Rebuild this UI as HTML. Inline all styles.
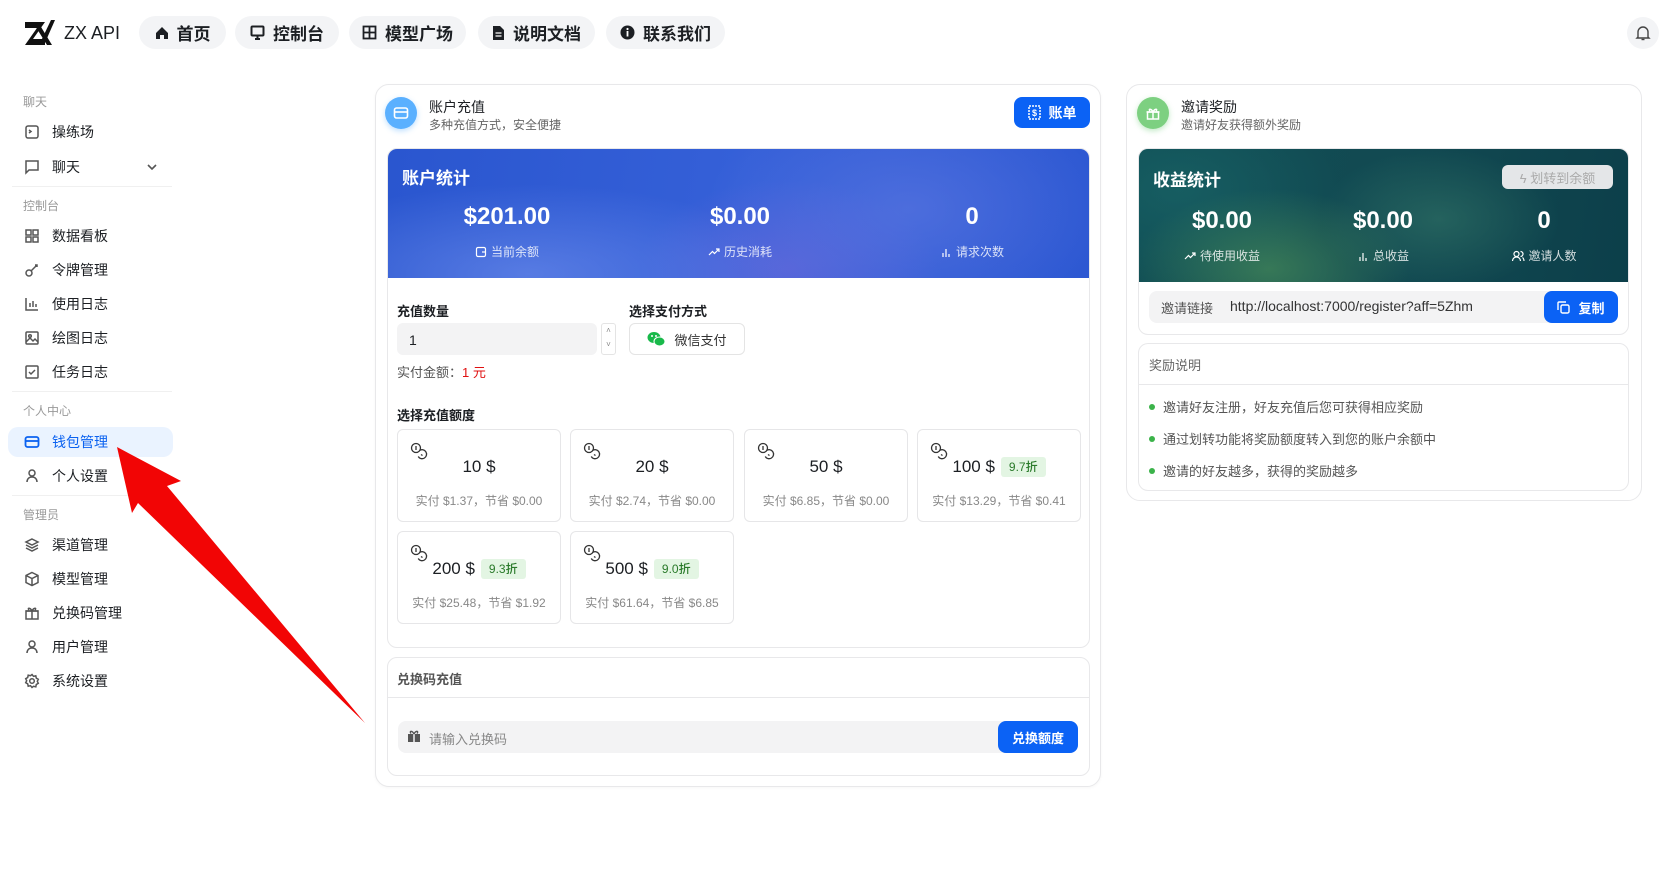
<!DOCTYPE html>
<html><head><meta charset="utf-8"><style>
*{box-sizing:border-box;margin:0;padding:0}
body{width:1663px;height:870px;background:#fff;font-family:"Liberation Sans","Noto Sans CJK SC",sans-serif;color:#1c1f23;position:relative;overflow:hidden;font-size:14px}
.a{position:absolute}
.pill{position:absolute;top:16px;height:33px;border-radius:17px;background:#f3f4f6;font-size:17px;font-weight:600;display:flex;align-items:center;justify-content:center;gap:8px;color:#1c1f23}
.sl{position:absolute;left:23px;font-size:12px;color:#999}
.si{position:absolute;left:24px;display:flex;align-items:center;gap:12px;font-size:14px;color:#1c1f23;transform:translateY(-50%)}
.si svg{width:16px;height:16px;stroke:#555;fill:none;stroke-width:1.5}
.card{position:absolute;border:1px solid #e8e8ea;border-radius:14px;background:#fff}
.hd1{font-size:14px;color:#1c1f23}
.hd2{font-size:12px;color:#666}
.val{position:absolute;color:#fff;font-weight:700;font-size:24px;transform:translateX(-50%);white-space:nowrap}
.lab{position:absolute;color:rgba(255,255,255,.82);font-size:12px;transform:translateX(-50%);white-space:nowrap;display:flex;align-items:center;gap:4px}
.g{position:absolute;width:164px;height:93px;border:1px solid #e6e6e8;border-radius:6px;background:#fff}
.g .amt{position:absolute;top:27px;left:0;right:0;text-align:center;font-size:17px;font-weight:500;color:#1c1f23}
.g .sub{position:absolute;top:62px;left:0;right:0;text-align:center;font-size:12px;color:#888}
.g svg{position:absolute;left:12px;top:12px}
.tag{display:inline-block;background:#e3f5e3;color:#2a7a2a;font-size:12px;padding:3px 8px;border-radius:3px;margin-left:6px;vertical-align:1px;line-height:14px}
.li{position:absolute;left:1156px;font-size:13px;color:#555;display:flex;align-items:center;gap:8px}
.li i{width:6px;height:6px;border-radius:3px;background:#3bb34a;display:inline-block}
#L{position:absolute;left:-3px;top:0;width:1663px;height:870px}
#R{position:absolute;left:-7px;top:0;width:1663px;height:870px}
</style></head><body>

<!-- header -->
<div class="a" style="left:24px;top:19px;display:flex;align-items:center;gap:8px">
<svg width="32" height="28" viewBox="0 0 32 28"><path d="M1 3h20l-12 17h12v6H1l12-17H1z" fill="#111"/><path d="M20 26L31 1h-4L17 22z" fill="#111"/><path d="M14 3l14 23h-5L10 5z" fill="#111"/></svg>
<span style="font-size:18px;font-weight:500">ZX API</span></div>
<div class="pill" style="left:139px;width:87px"><svg width="14" height="14" viewBox="0 0 14 14"><path d="M7 1L1 7v6h4V9h4v4h4V7z" fill="#1c1f23"/></svg>首页</div>
<div class="pill" style="left:235px;width:104px"><svg width="15" height="15" viewBox="0 0 15 15" fill="none" stroke="#1c1f23" stroke-width="2"><rect x="1.5" y="1.5" width="12" height="9" rx="1"/><path d="M5 14h5M7.5 11v3"/></svg>控制台</div>
<div class="pill" style="left:349px;width:117px"><svg width="15" height="15" viewBox="0 0 15 15" fill="none" stroke="#1c1f23" stroke-width="1.8"><rect x="1.5" y="1.5" width="12" height="12"/><path d="M7.5 1.5v12M1.5 7.5h12"/></svg>模型广场</div>
<div class="pill" style="left:478px;width:117px"><svg width="13" height="16" viewBox="0 0 13 16"><path d="M1 1h7l4 4v10H1z" fill="#1c1f23"/><path d="M3.5 8h6M3.5 11h6" stroke="#fff" stroke-width="1.3"/></svg>说明文档</div>
<div class="pill" style="left:606px;width:119px"><svg width="15" height="15" viewBox="0 0 15 15"><circle cx="7.5" cy="7.5" r="7" fill="#1c1f23"/><rect x="6.6" y="6" width="1.8" height="5.5" fill="#fff"/><circle cx="7.5" cy="4" r="1.1" fill="#fff"/></svg>联系我们</div>
<div class="a" style="left:1627px;top:17px;width:32px;height:32px;border-radius:16px;background:#f3f4f6;display:flex;align-items:center;justify-content:center"><svg width="16" height="16" viewBox="0 0 16 16" fill="none" stroke="#444" stroke-width="1.4"><path d="M3 12V7a5 5 0 0110 0v5l1 1H2z"/><path d="M6.5 14.5h3"/></svg></div>

<!-- sidebar -->
<div class="sl" style="top:93px">聊天</div>
<div class="si" style="top:132px"><svg viewBox="0 0 16 16"><rect x="2" y="2" width="12" height="12" rx="2"/><path d="M5 6l2 1.5L5 9"/></svg>操练场</div>
<div class="si" style="top:167px"><svg viewBox="0 0 16 16"><path d="M2 2h12v9H5l-3 3z"/></svg>聊天</div>
<svg class="a" style="left:146px;top:161px" width="12" height="12" viewBox="0 0 12 12" fill="none" stroke="#555" stroke-width="1.6"><path d="M2 4l4 4 4-4"/></svg>
<div class="a" style="left:12px;top:186px;width:160px;height:1px;background:#f0f0f0"></div>
<div class="sl" style="top:197px">控制台</div>
<div class="si" style="top:236px"><svg viewBox="0 0 16 16"><rect x="2" y="2" width="5" height="5"/><rect x="9" y="2" width="5" height="5"/><rect x="2" y="9" width="5" height="5"/><rect x="9" y="9" width="5" height="5"/></svg>数据看板</div>
<div class="si" style="top:270px"><svg viewBox="0 0 16 16"><circle cx="5" cy="11" r="3"/><path d="M7 9l6-6M11 3h2v2"/></svg>令牌管理</div>
<div class="si" style="top:304px"><svg viewBox="0 0 16 16"><path d="M2 2v12h12M6 11V7M9 11V5M12 11V8"/></svg>使用日志</div>
<div class="si" style="top:338px"><svg viewBox="0 0 16 16"><rect x="2" y="2" width="12" height="12" rx="1"/><circle cx="6" cy="6" r="1.3"/><path d="M2 12l4-4 3 3 2-2 3 3"/></svg>绘图日志</div>
<div class="si" style="top:372px"><svg viewBox="0 0 16 16"><rect x="2" y="2" width="12" height="12" rx="1"/><path d="M5 8l2 2 4-4"/></svg>任务日志</div>
<div class="a" style="left:12px;top:391px;width:160px;height:1px;background:#f0f0f0"></div>
<div class="sl" style="top:402px">个人中心</div>
<div class="a" style="left:8px;top:427px;width:165px;height:30px;border-radius:10px;background:#eaf3ff"></div>
<div class="si" style="top:442px;color:#0b62f0"><svg viewBox="0 0 16 16" style="stroke:#0b62f0;stroke-width:1.8"><rect x="1.5" y="3" width="13" height="10" rx="2"/><path d="M1.5 7h13"/></svg>钱包管理</div>
<div class="si" style="top:476px"><svg viewBox="0 0 16 16"><circle cx="8" cy="5" r="3"/><path d="M3 14c0-3 2-5 5-5s5 2 5 5"/></svg>个人设置</div>
<div class="a" style="left:12px;top:495px;width:160px;height:1px;background:#f0f0f0"></div>
<div class="sl" style="top:506px">管理员</div>
<div class="si" style="top:545px"><svg viewBox="0 0 16 16"><path d="M8 2l6 3-6 3-6-3zM2 8l6 3 6-3M2 11l6 3 6-3"/></svg>渠道管理</div>
<div class="si" style="top:579px"><svg viewBox="0 0 16 16"><path d="M8 1.5l6 3v7l-6 3-6-3v-7zM2 4.5l6 3 6-3M8 7.5v7"/></svg>模型管理</div>
<div class="si" style="top:613px"><svg viewBox="0 0 16 16"><rect x="2" y="6" width="12" height="8"/><path d="M1.5 6h13M8 6v8M8 6C6 2 3 3 5 5M8 6c2-4 5-3 3-1"/></svg>兑换码管理</div>
<div class="si" style="top:647px"><svg viewBox="0 0 16 16"><circle cx="8" cy="5" r="3"/><path d="M3 14c0-3 2-5 5-5s5 2 5 5"/></svg>用户管理</div>
<div class="si" style="top:681px"><svg viewBox="0 0 16 16"><circle cx="8" cy="8" r="2.3"/><path d="M8 1.5l1.5 1.8 2.3-.5.5 2.3 2 1.2-1 2 1 2-2 1.2-.5 2.3-2.3-.5L8 14.5l-1.5-1.8-2.3.5-.5-2.3-2-1.2 1-2-1-2 2-1.2.5-2.3 2.3.5z"/></svg>系统设置</div>

<div id="L">
<!-- main left card -->
<div class="card" style="left:378px;top:84px;width:726px;height:703px;box-shadow:0 1px 3px rgba(0,0,0,.04)"></div>
<div class="a" style="left:388px;top:97px;width:32px;height:32px;border-radius:16px;background:#5ab0ff;box-shadow:0 2px 6px rgba(90,176,255,.4);display:flex;align-items:center;justify-content:center"><svg width="16" height="16" viewBox="0 0 16 16" fill="none" stroke="#fff" stroke-width="1.6"><rect x="1.5" y="3" width="13" height="10" rx="2"/><path d="M1.5 7h13"/></svg></div>
<div class="a hd1" style="left:432px;top:97px">账户充值</div>
<div class="a hd2" style="left:432px;top:116px">多种充值方式，安全便捷</div>
<div class="a" style="left:1017px;top:97px;width:76px;height:31px;border-radius:8px;background:#0b62f5;color:#fff;font-weight:700;font-size:14px;display:flex;align-items:center;justify-content:center;gap:8px"><svg width="13" height="15" viewBox="0 0 13 15" fill="none" stroke="#fff" stroke-width="1.5"><rect x="1" y="1" width="11" height="13" stroke-dasharray="2 1"/><text x="6.5" y="11" font-size="9" fill="#fff" stroke="none" text-anchor="middle" font-family="Liberation Sans" font-weight="700">$</text></svg>账单</div>

<div class="card" style="left:390px;top:148px;width:703px;height:500px;border-radius:10px;overflow:hidden">
<div style="height:129px;background:radial-gradient(ellipse 260px 90px at 140px 125px,rgba(120,150,240,.55),transparent),radial-gradient(ellipse 200px 120px at 520px 60px,rgba(110,130,230,.45),transparent),radial-gradient(ellipse 150px 90px at 400px 120px,rgba(150,110,220,.35),transparent),linear-gradient(100deg,#2a56cf,#3560d8 50%,#2d58d2)"></div>
</div>
<div class="a" style="left:405px;top:164px;color:#fff;font-weight:700;font-size:17px">账户统计</div>
<div class="val" style="left:510px;top:203px">$201.00</div>
<div class="val" style="left:743px;top:203px">$0.00</div>
<div class="val" style="left:975px;top:203px">0</div>
<div class="lab" style="left:510px;top:243px"><svg width="12" height="12" viewBox="0 0 12 12" fill="none" stroke="#fff" stroke-width="1.2"><rect x="1.5" y="1.5" width="9" height="9" rx="1.5"/><path d="M7 6h3.5"/></svg>当前余额</div>
<div class="lab" style="left:743px;top:243px"><svg width="12" height="12" viewBox="0 0 12 12" fill="none" stroke="#fff" stroke-width="1.2"><path d="M1 9l3.5-3.5 2 2L11 3M8 3h3v3"/></svg>历史消耗</div>
<div class="lab" style="left:975px;top:243px"><svg width="12" height="12" viewBox="0 0 12 12" fill="none" stroke="#fff" stroke-width="1.2"><path d="M3 11V7M6 11V3M9 11V8"/></svg>请求次数</div>

<div class="a" style="left:400px;top:301px;font-size:13px;font-weight:700">充值数量</div>
<div class="a" style="left:400px;top:323px;width:200px;height:32px;border-radius:6px;background:#f3f3f4;font-size:14px;padding:9px 12px">1</div>
<div class="a" style="left:604px;top:323px;width:15px;height:32px;border:1px solid #e4e4e4;border-radius:3px;font-size:8px;color:#888;text-align:center;line-height:14px">˄<br>˅</div>
<div class="a" style="left:400px;top:362px;font-size:13px;color:#555">实付金额：<span style="color:#e01010">1 元</span></div>
<div class="a" style="left:632px;top:301px;font-size:13px;font-weight:700">选择支付方式</div>
<div class="a" style="left:632px;top:323px;width:116px;height:32px;border:1px solid #e4e4e4;border-radius:6px;display:flex;align-items:center;justify-content:center;gap:8px;font-size:13px;color:#333"><svg width="19" height="16" viewBox="0 0 19 16"><ellipse cx="7" cy="6.5" rx="6.5" ry="5.5" fill="#19b94a"/><ellipse cx="12.5" cy="10.5" rx="5.5" ry="4.5" fill="#19b94a" stroke="#fff" stroke-width="1"/><circle cx="5" cy="5" r="1" fill="#fff"/><circle cx="9" cy="5" r="1" fill="#fff"/></svg>微信支付</div>

<div class="a" style="left:400px;top:405px;font-size:13px;font-weight:700">选择充值额度</div>
<svg width="0" height="0" style="position:absolute"><defs><g id="coin" fill="none" stroke="#333" stroke-width="1.3"><circle cx="6" cy="6" r="4.5"/><path d="M6 4v4"/><path d="M9.5 8.5a4.5 4.5 0 11-1.3 6" /><path d="M11 12.5l1.5 1"/></g></defs></svg>
<div class="g" style="left:400px;top:429px"><svg width="18" height="18"><use href="#coin"/></svg><div class="amt">10 $</div><div class="sub">实付 $1.37，节省 $0.00</div></div>
<div class="g" style="left:573px;top:429px"><svg width="18" height="18"><use href="#coin"/></svg><div class="amt">20 $</div><div class="sub">实付 $2.74，节省 $0.00</div></div>
<div class="g" style="left:747px;top:429px"><svg width="18" height="18"><use href="#coin"/></svg><div class="amt">50 $</div><div class="sub">实付 $6.85，节省 $0.00</div></div>
<div class="g" style="left:920px;top:429px"><svg width="18" height="18"><use href="#coin"/></svg><div class="amt">100 $<span class="tag">9.7折</span></div><div class="sub">实付 $13.29，节省 $0.41</div></div>
<div class="g" style="left:400px;top:531px"><svg width="18" height="18"><use href="#coin"/></svg><div class="amt">200 $<span class="tag">9.3折</span></div><div class="sub">实付 $25.48，节省 $1.92</div></div>
<div class="g" style="left:573px;top:531px"><svg width="18" height="18"><use href="#coin"/></svg><div class="amt">500 $<span class="tag">9.0折</span></div><div class="sub">实付 $61.64，节省 $6.85</div></div>

<div class="card" style="left:390px;top:657px;width:703px;height:119px;border-radius:10px"></div>
<div class="a" style="left:400px;top:669px;font-size:13px;color:#555;font-weight:600">兑换码充值</div>
<div class="a" style="left:390px;top:697px;width:703px;height:1px;background:#e8e8ea"></div>
<div class="a" style="left:401px;top:721px;width:680px;height:32px;border-radius:8px;background:#f3f3f4"></div>
<svg class="a" style="left:410px;top:729px" width="14" height="14" viewBox="0 0 14 14"><rect x="1" y="5" width="12" height="8" fill="#555"/><path d="M7 5v8" stroke="#f3f3f4" stroke-width="1.5"/><path d="M7 5C5 1 2 2 4 4.5M7 5c2-4 5-3 3-.5" stroke="#555" stroke-width="1.4" fill="none"/></svg>
<div class="a" style="left:432px;top:729px;font-size:13px;color:#888">请输入兑换码</div>
<div class="a" style="left:1001px;top:721px;width:80px;height:32px;border-radius:8px;background:#0b62f5;color:#fff;font-weight:700;font-size:13px;display:flex;align-items:center;justify-content:center">兑换额度</div>
</div>

<div id="R">
<!-- right card -->
<div class="card" style="left:1133px;top:84px;width:516px;height:417px"></div>
<div class="a" style="left:1144px;top:97px;width:32px;height:32px;border-radius:16px;background:#7dd081;box-shadow:0 2px 6px rgba(100,200,110,.4);display:flex;align-items:center;justify-content:center"><svg width="16" height="16" viewBox="0 0 16 16" fill="none" stroke="#fff" stroke-width="1.5"><rect x="2.5" y="7" width="11" height="7"/><path d="M1.5 7h13M8 7v7M8 7C6 3 3 4 5 6M8 7c2-4 5-3 3-1"/></svg></div>
<div class="a hd1" style="left:1188px;top:97px">邀请奖励</div>
<div class="a hd2" style="left:1188px;top:116px">邀请好友获得额外奖励</div>

<div class="card" style="left:1145px;top:148px;width:491px;height:187px;border-radius:10px;overflow:hidden">
<div style="height:133px;background:radial-gradient(ellipse 140px 80px at 130px 120px,rgba(80,150,90,.6),transparent),radial-gradient(ellipse 120px 70px at 300px 70px,rgba(60,130,110,.45),transparent),radial-gradient(ellipse 160px 100px at 40px 40px,rgba(30,110,110,.5),transparent),linear-gradient(100deg,#0f4d55,#124a52 50%,#0c3f4a)"></div>
</div>
<div class="a" style="left:1160px;top:166px;color:#fff;font-weight:700;font-size:17px">收益统计</div>
<div class="a" style="left:1509px;top:165px;width:111px;height:24px;border-radius:6px;background:#e4e6e8;color:#aaa;font-size:13px;display:flex;align-items:center;justify-content:center;gap:4px">ϟ 划转到余额</div>
<div class="val" style="left:1229px;top:207px">$0.00</div>
<div class="val" style="left:1390px;top:207px">$0.00</div>
<div class="val" style="left:1551px;top:207px">0</div>
<div class="lab" style="left:1229px;top:247px"><svg width="12" height="12" viewBox="0 0 12 12" fill="none" stroke="#fff" stroke-width="1.2"><path d="M1 9l3.5-3.5 2 2L11 3M8 3h3v3"/></svg>待使用收益</div>
<div class="lab" style="left:1390px;top:247px"><svg width="12" height="12" viewBox="0 0 12 12" fill="none" stroke="#fff" stroke-width="1.2"><path d="M3 11V7M6 11V3M9 11V8"/></svg>总收益</div>
<div class="lab" style="left:1551px;top:247px"><svg width="13" height="12" viewBox="0 0 13 12" fill="none" stroke="#fff" stroke-width="1.2"><circle cx="5" cy="4" r="2.5"/><path d="M1 11c0-2.5 2-4 4-4s4 1.5 4 4M9 1.5a2.5 2.5 0 010 5M11 7.5c1 .7 1.5 2 1.5 3.5"/></svg>邀请人数</div>
<div class="a" style="left:1156px;top:291px;width:469px;height:32px;border-radius:8px;background:#f3f3f4"></div>
<div class="a" style="left:1168px;top:298px;font-size:13px;color:#555">邀请链接</div>
<div class="a" style="left:1237px;top:298px;font-size:14px;color:#333">http://localhost:7000/register?aff=5Zhm</div>
<div class="a" style="left:1551px;top:291px;width:74px;height:32px;border-radius:8px;background:#0b62f5;color:#fff;font-weight:700;font-size:13px;display:flex;align-items:center;justify-content:center;gap:8px"><svg width="13" height="13" viewBox="0 0 13 13" fill="none" stroke="#fff" stroke-width="1.4"><rect x="4" y="4" width="8" height="8" rx="1.5"/><path d="M1 9V2a1 1 0 011-1h7"/></svg>复制</div>

<div class="card" style="left:1145px;top:343px;width:491px;height:148px;border-radius:10px"></div>
<div class="a" style="left:1156px;top:355px;font-size:13px;color:#666">奖励说明</div>
<div class="a" style="left:1145px;top:384px;width:491px;height:1px;background:#e8e8ea"></div>
<div class="li" style="top:397px"><i></i>邀请好友注册，好友充值后您可获得相应奖励</div>
<div class="li" style="top:429px"><i></i>通过划转功能将奖励额度转入到您的账户余额中</div>
<div class="li" style="top:461px"><i></i>邀请的好友越多，获得的奖励越多</div>
</div>

<!-- red arrow -->
<svg class="a" style="left:0;top:0" width="1663" height="870"><polygon points="117,447 181,481 167,486 365,723 138,503 132,513" fill="#f20505"/></svg>
</body></html>
